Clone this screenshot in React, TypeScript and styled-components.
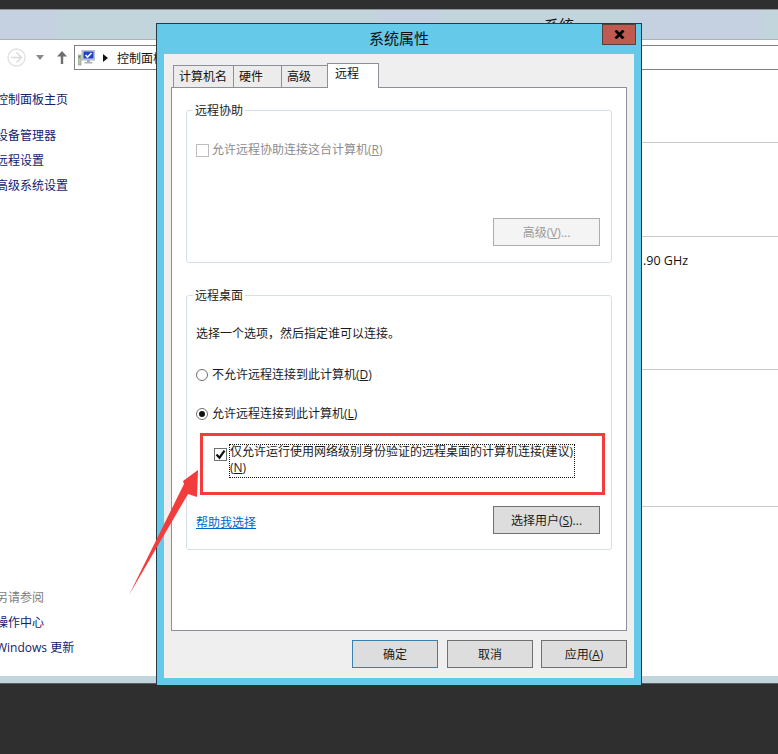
import * as React from 'react'
import styled, { createGlobalStyle } from 'styled-components'

const GlobalStyle = createGlobalStyle`
	html, body {
		margin: 0;
		padding: 0;
		background: #2f2f2f;
	}
	body {
		font-family: "Open Sans", "Noto Sans CJK SC", sans-serif;
		font-size: 12px;
		color: #1a1a1a;
	}
`

const Page = styled.div`
	position: relative;
	width: 778px;
	height: 754px;
	overflow: hidden;
	padding-top: 9px;
	box-sizing: border-box;
`

const Explorer = styled.div`
	display: flex;
	flex-direction: column;
	height: 675px;
	border-top: 1px solid #8d9396;
	border-bottom: 1px solid #5a5f62;
	box-sizing: border-box;
`

// the frame colours come from the wallpaper behind the glass, hence the hard stops
const Caption = styled.div`
	height: 30px;
	flex: none;
	box-sizing: border-box;
	padding: 7px 0 0 544px;
	font-size: 15px;
	line-height: 16px;
	color: #111;
	border-bottom: 1px solid #a9b5bb;
	background: linear-gradient(
		to right,
		#c5d0e0 0 57px,
		#c2d5dc 57px 377px,
		#c5d0e0 377px 440px,
		#c2d5dc 440px 633px,
		#c5d0e0 633px 762px,
		#c2d5dc 762px
	);
`

const Client = styled.div`
	flex: 1;
	display: flex;
	flex-direction: column;
	background: #fff;
	min-height: 0;
`

const BottomEdge = styled.div`
	height: 7px;
	flex: none;
	background: #c2d5dc;
`

const NavRow = styled.div`
	display: flex;
	align-items: center;
	height: 25px;
	flex: none;
	margin-top: 5px;
	padding-left: 7px;
`

const NavIcon = styled.svg<{ $gap: number }>`
	display: block;
	flex: none;
	margin-left: ${p => p.$gap}px;
`

const AddressBar = styled.div`
	flex: 1;
	display: flex;
	align-items: center;
	height: 25px;
	box-sizing: border-box;
	margin-left: 7px;
	padding-left: 3px;
	border: 1px solid #808080;
	border-right: 0;
`

const CrumbArrow = styled.svg`
	margin-left: 8px;
	flex: none;
`

const Crumb = styled.span`
	margin-left: 9px;
	color: #111;
`

const Columns = styled.div`
	flex: 1;
	display: flex;
	min-height: 0;
`

const Sidebar = styled.nav`
	width: 160px;
	flex: none;
	display: flex;
	flex-direction: column;
	justify-content: space-between;
	box-sizing: border-box;
	margin-left: -4px;
	padding: 17px 0 16px;
`

const SideGroup = styled.div`
	display: flex;
	flex-direction: column;
`

const SideLink = styled.a<{ $top?: number }>`
	display: block;
	height: 25px;
	line-height: 25px;
	color: #14206e;
	white-space: nowrap;
	margin-top: ${p => p.$top ?? 0}px;
`

const SideTitle = styled(SideLink)`
	color: #7d7d7d;
`

const Main = styled.div`
	flex: 1;
	display: flex;
	flex-direction: column;
`

const Section = styled.section<{ $height: number }>`
	height: ${p => p.$height}px;
	flex: none;
	box-sizing: border-box;
	border-bottom: 1px solid #c9c9c9;
	padding: 15px 0 0 487px;
	font-size: 12.5px;
	line-height: 18px;
	color: #111;
`

const Dialog = styled.div`
	position: absolute;
	left: 156px;
	top: 23px;
	width: 486px;
	height: 662px;
	box-sizing: border-box;
	display: flex;
	flex-direction: column;
	background: #65c9ea;
	border: 1px solid #263a48;
	border-bottom: 0;
`

const TitleBar = styled.div`
	position: relative;
	height: 29px;
	flex: none;
	text-align: center;
	font-size: 15px;
	line-height: 29px;
	color: #111;
`

const CloseButton = styled.button`
	position: absolute;
	right: 5px;
	top: 0;
	width: 34px;
	height: 21px;
	padding: 0;
	display: flex;
	align-items: center;
	justify-content: center;
	box-sizing: border-box;
	background: #c0594f;
	border: 1px solid #51423f;
`

const DialogBody = styled.div`
	flex: 1;
	display: flex;
	flex-direction: column;
	margin: 0 7px 7px;
	padding: 10px 7px 10px;
	box-sizing: border-box;
	background: #efefef;
	border-top: 1px solid #8fbbcf;
`

const TabStrip = styled.div`
	display: flex;
	align-items: flex-end;
	flex: none;
	height: 24px;
	padding-left: 2px;
	position: relative;
	z-index: 1;
	margin-bottom: -1px;
`

const Tab = styled.div<{ $width: number; $active?: boolean }>`
	width: ${p => p.$width}px;
	height: ${p => (p.$active ? 25 : 23)}px;
	box-sizing: border-box;
	padding-left: ${p => (p.$active ? 7 : 5)}px;
	line-height: ${p => (p.$active ? 20 : 21)}px;
	color: #111;
	background: ${p => (p.$active ? '#fff' : '#ececec')};
	border: 1px solid #8d9096;
	border-bottom: ${p => (p.$active ? '0' : '1px solid #8d9096')};
	margin-right: ${p => (p.$active ? 0 : -1)}px;
	white-space: nowrap;
`

const TabPanel = styled.div`
	height: 544px;
	flex: none;
	box-sizing: border-box;
	display: flex;
	flex-direction: column;
	gap: 32px;
	padding: 22px 14px 0;
	background: #fff;
	border: 1px solid #8d9096;
`

const GroupBox = styled.div<{ $height: number }>`
	position: relative;
	height: ${p => p.$height}px;
	flex: none;
	box-sizing: border-box;
	display: flex;
	flex-direction: column;
	padding: 0 11px 15px 9px;
	border: 1px solid #d5dfe6;
	border-radius: 3px;
`

const GroupLegend = styled.span`
	position: absolute;
	left: 6px;
	top: -8px;
	padding: 0 2px;
	line-height: 16px;
	background: #fff;
	color: #222;
`

const OptionRow = styled.label<{ $top: number; $disabled?: boolean }>`
	display: flex;
	align-items: center;
	gap: 4px;
	height: 16px;
	margin-top: ${p => p.$top}px;
	line-height: 16px;
	color: ${p => (p.$disabled ? '#8c8c8c' : '#1a1a1a')};
	white-space: nowrap;
`

const Hint = styled.p`
	margin: 30px 0 0;
	height: 16px;
	line-height: 16px;
	color: #1a1a1a;
`

const CheckBox = styled.span<{ $disabled?: boolean }>`
	width: 13px;
	height: 13px;
	flex: none;
	margin-right: -1px;
	display: flex;
	align-items: center;
	justify-content: center;
	box-sizing: border-box;
	background: #fff;
	border: 1px solid ${p => (p.$disabled ? '#bdbdbd' : '#707070')};
`

const Radio = styled.span<{ $checked?: boolean }>`
	width: 12px;
	height: 12px;
	flex: none;
	display: flex;
	align-items: center;
	justify-content: center;
	box-sizing: border-box;
	border-radius: 50%;
	background: #fff;
	border: 1px solid #707070;
	&::after {
		content: '';
		display: ${p => (p.$checked ? 'block' : 'none')};
		width: 6px;
		height: 6px;
		border-radius: 50%;
		background: #111;
	}
`

const NlaRow = styled.div`
	display: flex;
	align-items: flex-start;
	gap: 3px;
	margin: 22px 0 0 18px;
`

const NlaTick = styled(CheckBox)`
	margin-top: 4px;
`

const FocusLabel = styled.div`
	width: 346px;
	height: 34px;
	box-sizing: border-box;
	padding: 0 0 0 1px;
	line-height: 16px;
	white-space: nowrap;
	color: #1a1a1a;
	outline: 1px dotted #111;
	outline-offset: -1px;
`

const ActionRow = styled.div`
	display: flex;
	align-items: center;
	justify-content: space-between;
	margin-top: auto;
`

const HelpLink = styled.a`
	padding-top: 3px;
	color: #0066cc;
	text-decoration: underline;
`

const Button = styled.button<{ $default?: boolean }>`
	width: 107px;
	height: 28px;
	padding: 0;
	box-sizing: border-box;
	font: inherit;
	color: #1a1a1a;
	background: #dddddd;
	border: 1px solid ${p => (p.$default ? '#3c7fb1' : '#707070')};
	&:disabled {
		color: #9a9a9a;
		background: #f4f4f4;
		border-color: #adadad;
	}
`

const EndButton = styled.div`
	display: flex;
	justify-content: flex-end;
	margin-top: auto;
	margin-bottom: 1px;
`

const Footer = styled.div`
	display: flex;
	justify-content: flex-end;
	gap: 8px;
	margin-top: 9px;
`

const FooterButton = styled(Button)`
	width: 86px;
	margin-right: ${p => (p.$default ? 1 : 0)}px;
`

const RedFrame = styled.div`
	position: absolute;
	left: 200px;
	top: 433px;
	width: 405px;
	height: 62px;
	box-sizing: border-box;
	border: 3px solid #f33c3c;
	pointer-events: none;
`

const Arrow = styled.svg`
	position: absolute;
	left: 0;
	top: 0;
	pointer-events: none;
`

const BACK_TABS = [
	{ key: 'name', label: '计算机名', width: 61 },
	{ key: 'hw', label: '硬件', width: 49 },
	{ key: 'adv', label: '高级', width: 47 },
]

export default function App() {
	return (
		<Page>
			<GlobalStyle />
			<Explorer>
				<Caption>系统</Caption>
				<Client>
					<NavRow>
						<NavIcon $gap={0} width="19" height="21" viewBox="0 0 19 21">
							<circle cx="9.5" cy="10.5" r="8.5" fill="none" stroke="#e0e0e0" strokeWidth="1.3" />
							<path d="M4 10.5h10M9.5 5.5l5 5-5 5" fill="none" stroke="#dadada" strokeWidth="1.5" />
						</NavIcon>
						<NavIcon $gap={10} width="8" height="5" viewBox="0 0 8 5">
							<path d="M0 0h8L4 5z" fill="#8a8a8a" />
						</NavIcon>
						<NavIcon $gap={13} width="10" height="13" viewBox="0 0 10 13">
							<path d="M5 0l5 5.5H6.2V13H3.8V5.5H0z" fill="#6f6f6f" />
						</NavIcon>
						<AddressBar>
							<svg width="17" height="16" viewBox="0 0 17 16">
								<rect x="0" y="5" width="3" height="10" fill="#b9c7a8" stroke="#8a8a8a" strokeWidth="0.6" />
								<rect x="0.8" y="6" width="1.4" height="2" fill="#3fae3f" />
								<rect x="4" y="0" width="13" height="10" fill="#cfd6e2" stroke="#9aa3b0" strokeWidth="0.8" />
								<rect x="5.5" y="1.5" width="10" height="7" fill="#1f3fd0" />
								<path d="M7.5 5l2 2 4-4" fill="none" stroke="#fff" strokeWidth="1.6" />
								<path d="M9 10h3v2h2.5v1.5H6.5V12H9z" fill="#a9b0ba" />
							</svg>
							<CrumbArrow width="5" height="8" viewBox="0 0 5 8">
								<path d="M0 0l5 4-5 4z" fill="#111" />
							</CrumbArrow>
							<Crumb>控制面板</Crumb>
						</AddressBar>
					</NavRow>
					<Columns>
						<Sidebar>
							<SideGroup>
								<SideLink>控制面板主页</SideLink>
								<SideLink $top={11}>设备管理器</SideLink>
								<SideLink>远程设置</SideLink>
								<SideLink>高级系统设置</SideLink>
							</SideGroup>
							<SideGroup>
								<SideTitle>另请参阅</SideTitle>
								<SideLink>操作中心</SideLink>
								<SideLink>Windows 更新</SideLink>
							</SideGroup>
						</Sidebar>
						<Main>
							<Section $height={73} />
							<Section $height={94} />
							<Section $height={133}>.90 GHz</Section>
							<Section $height={137} />
						</Main>
					</Columns>
					<BottomEdge />
				</Client>
			</Explorer>

			<Dialog>
				<TitleBar>
					系统属性
					<CloseButton aria-label="关闭">
						<svg width="11" height="9" viewBox="0 0 11 9">
							<path d="M1.5 0.5l8 8M9.5 0.5l-8 8" stroke="#000" strokeWidth="2.8" />
						</svg>
					</CloseButton>
				</TitleBar>
				<DialogBody>
					<TabStrip>
						{BACK_TABS.map(tab => (
							<Tab key={tab.key} $width={tab.width}>{tab.label}</Tab>
						))}
						<Tab $width={52} $active>远程</Tab>
					</TabStrip>
					<TabPanel>
						<GroupBox $height={153}>
							<GroupLegend>远程协助</GroupLegend>
							<OptionRow $top={31} $disabled>
								<CheckBox $disabled />
								<span>允许远程协助连接这台计算机(<u>R</u>)</span>
							</OptionRow>
							<EndButton>
								<Button disabled>高级(<u>V</u>)...</Button>
							</EndButton>
						</GroupBox>
						<GroupBox $height={255}>
							<GroupLegend>远程桌面</GroupLegend>
							<Hint>选择一个选项，然后指定谁可以连接。</Hint>
							<OptionRow $top={25}>
								<Radio />
								<span>不允许远程连接到此计算机(<u>D</u>)</span>
							</OptionRow>
							<OptionRow $top={23}>
								<Radio $checked />
								<span>允许远程连接到此计算机(<u>L</u>)</span>
							</OptionRow>
							<NlaRow>
								<NlaTick>
									<svg width="11" height="11" viewBox="0 0 11 11">
										<path d="M1.5 5.5l3 3.2 5-7" fill="none" stroke="#111" strokeWidth="2.2" />
									</svg>
								</NlaTick>
								<FocusLabel>
									仅允许运行使用网络级别身份验证的远程桌面的计算机连接(建议)
									<br />
									(<u>N</u>)
								</FocusLabel>
							</NlaRow>
							<ActionRow>
								<HelpLink>帮助我选择</HelpLink>
								<Button>选择用户(<u>S</u>)...</Button>
							</ActionRow>
						</GroupBox>
					</TabPanel>
					<Footer>
						<FooterButton $default>确定</FooterButton>
						<FooterButton>取消</FooterButton>
						<FooterButton>应用(<u>A</u>)</FooterButton>
					</Footer>
				</DialogBody>
			</Dialog>

			<RedFrame />
			<Arrow width="778" height="754" viewBox="0 0 778 754">
				<polygon points="129,595 184,484 183,481 198,470 197,497 188,494" fill="#f33c3c" />
			</Arrow>
		</Page>
	)
}
